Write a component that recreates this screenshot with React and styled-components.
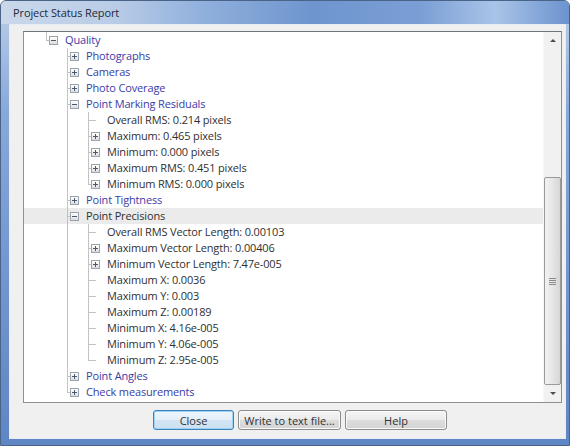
import React from 'react';
import styled, { createGlobalStyle, css } from 'styled-components';

const GlobalStyle = createGlobalStyle`
  html, body {
    margin: 0;
    padding: 0;
    background: #ffffff;
  }
  body {
    font-family: "Open Sans", "Noto Sans", "Liberation Sans", sans-serif;
  }
`;

const colors = {
  link: '#3b3ba6',
  text: '#303030',
  line: '#c2c2c2',
  panel: '#f0f0f0',
};

const Window = styled.div`
  width: 570px;
  height: 446px;
  box-sizing: border-box;
  display: flex;
  flex-direction: column;
  border: 1px solid #4a6488;
  border-radius: 6px 6px 0 0;
  background: linear-gradient(to bottom, #bccfe9 0%, #87a8da 25%, #7397d0 60%, #5f86c4 100%);
  overflow: hidden;
`;

const TitleBar = styled.div`
  height: 23px;
  flex: none;
  display: flex;
  align-items: center;
  padding-left: 12px;
  background: linear-gradient(
    to right,
    #cad8ea 0%,
    #b9cce7 20%,
    #8fafdc 36%,
    #6f95cf 55%,
    #7b9fd5 74%,
    #a9c4e8 87%,
    #6c93ce 100%
  );
  font-size: 11px;
  letter-spacing: -0.1px;
  color: #1c2a3c;
`;

const Body = styled.div`
  flex: 1;
  margin: 0 3px 6px 8px;
  border: 1px solid #e6edf6;
  background: ${colors.panel};
  display: flex;
  flex-direction: column;
  padding: 6px 3px 0 13px;
`;

const TreeBox = styled.div`
  height: 372px;
  box-sizing: border-box;
  display: flex;
  background: #ffffff;
  border: 1px solid #8c8f94;
  border-top-color: #707378;
`;

const TreeList = styled.div`
  flex: 1;
  overflow: hidden;
`;

const Row = styled.div`
  height: 16px;
  display: flex;
  align-items: stretch;
  padding-left: 19px;
  background: ${p => (p.$selected ? '#ebebeb' : 'transparent')};
`;

// one 21px indent step; the sibling line runs 3px in from its left edge
const GuideCell = styled.div`
  position: relative;
  width: 21px;
  flex: none;

  ${p => (p.$vTop || p.$vBottom) && css`
    &::before {
      content: '';
      position: absolute;
      left: 3px;
      width: 1px;
      top: ${p.$vTop ? (p.$root ? '-2px' : '0') : '8px'};
      bottom: ${p.$vBottom ? '0' : '8px'};
      background: ${colors.line};
    }
  `}

  ${p => p.$stub && css`
    &::after {
      content: '';
      position: absolute;
      left: 3px;
      top: 8px;
      width: ${p.$stub}px;
      height: 1px;
      background: ${colors.line};
    }
  `}
`;

const NodeCell = styled(GuideCell)`
  display: flex;
  align-items: center;
`;

const Expander = styled.span`
  position: relative;
  z-index: 1;
  margin-left: 6px;
  width: 9px;
  height: 9px;
  box-sizing: border-box;
  border: 1px solid #9aa3ae;
  background: linear-gradient(to bottom, #ffffff 0%, #f0f0f0 50%, #dcdcdc 100%);

  &::before {
    content: '';
    position: absolute;
    left: 1px;
    top: 3px;
    width: 5px;
    height: 1px;
    background: #4a5870;
  }

  ${p => !p.$open && css`
    &::after {
      content: '';
      position: absolute;
      left: 3px;
      top: 1px;
      width: 1px;
      height: 5px;
      background: #4a5870;
    }
  `}
`;

const Label = styled.span`
  padding-left: 1px;
  font-size: 11px;
  letter-spacing: -0.15px;
  line-height: 16px;
  white-space: nowrap;
  color: ${p => (p.$link ? colors.link : colors.text)};
`;

const ScrollBar = styled.div`
  width: 17px;
  flex: none;
  display: flex;
  flex-direction: column;
  background: #f1f1f1;
  border-left: 1px solid #f8f8f8;
`;

const ArrowButton = styled.div`
  height: 17px;
  flex: none;
  display: flex;
  align-items: center;
  justify-content: center;

  &::before {
    content: '';
    border-left: 3px solid transparent;
    border-right: 3px solid transparent;
    ${p => (p.$down ? 'border-top: 3px solid #4a4a4a;' : 'border-bottom: 3px solid #4a4a4a;')}
  }
`;

const Track = styled.div`
  flex: 1;
  display: flex;
  flex-direction: column;
  padding-top: 128px;
`;

const Thumb = styled.div`
  flex: 1;
  border: 1px solid #9a9a9a;
  border-radius: 2px;
  background: linear-gradient(to right, #f2f2f2 0%, #e6e6e6 50%, #d6d6d6 100%);
  display: flex;
  align-items: center;
  justify-content: center;
`;

const Grip = styled.div`
  width: 7px;
  height: 7px;
  background: repeating-linear-gradient(to bottom, #8c8c8c 0 1px, transparent 1px 2px);
`;

const ButtonRow = styled.div`
  display: flex;
  gap: 4px;
  padding: 7px 0 0 130px;
`;

const Button = styled.button`
  width: ${p => p.$width}px;
  height: 20px;
  padding: 0;
  border-radius: 3px;
  font-family: inherit;
  font-size: 11px;
  color: #333333;
  border: 1px solid #8b8b8b;
  background: linear-gradient(to bottom, #f5f5f5 0%, #ebebeb 50%, #dddddd 51%, #d3d3d3 100%);
  box-shadow: inset 0 0 0 1px #fbfbfb;

  ${p => p.$primary && css`
    border-color: #3d82b8;
    background: linear-gradient(to bottom, #eef6fc 0%, #e2eef8 50%, #d3e5f3 51%, #cbe0f1 100%);
    box-shadow: inset 0 0 0 1px #9fd3f4;
  `}
`;

const tree = {
  label: 'Quality',
  link: true,
  children: [
    { label: 'Photographs', link: true, collapsed: true },
    { label: 'Cameras', link: true, collapsed: true },
    { label: 'Photo Coverage', link: true, collapsed: true },
    {
      label: 'Point Marking Residuals',
      link: true,
      children: [
        { label: 'Overall RMS: 0.214 pixels' },
        { label: 'Maximum: 0.465 pixels', collapsed: true },
        { label: 'Minimum: 0.000 pixels', collapsed: true },
        { label: 'Maximum RMS: 0.451 pixels', collapsed: true },
        { label: 'Minimum RMS: 0.000 pixels', collapsed: true },
      ],
    },
    { label: 'Point Tightness', link: true, collapsed: true },
    {
      label: 'Point Precisions',
      selected: true,
      children: [
        { label: 'Overall RMS Vector Length: 0.00103' },
        { label: 'Maximum Vector Length: 0.00406', collapsed: true },
        { label: 'Minimum Vector Length: 7.47e-005', collapsed: true },
        { label: 'Maximum X: 0.0036' },
        { label: 'Maximum Y: 0.003' },
        { label: 'Maximum Z: 0.00189' },
        { label: 'Minimum X: 4.16e-005' },
        { label: 'Minimum Y: 4.06e-005' },
        { label: 'Minimum Z: 2.95e-005' },
      ],
    },
    { label: 'Point Angles', link: true, collapsed: true },
    { label: 'Check measurements', link: true, collapsed: true },
  ],
};

// walk the tree into visible rows; lastPath[d] says whether the node at depth d is a last sibling
function flatten(node, depth = 0, lastPath = [true], out = []) {
  out.push({ node, depth, lastPath });
  const kids = node.children || [];
  kids.forEach((child, i) => {
    flatten(child, depth + 1, [...lastPath, i === kids.length - 1], out);
  });
  return out;
}

function TreeRow({ node, depth, lastPath }) {
  const open = !!node.children;
  const hasBox = open || node.collapsed;
  const isLast = lastPath[depth];

  const guides = [];
  for (let k = 0; k < depth; k++) {
    const through = !lastPath[k];
    guides.push(<GuideCell key={k} $vTop={through} $vBottom={through} />);
  }

  return (
    <Row $selected={node.selected}>
      {guides}
      <NodeCell $vTop $vBottom={!isLast} $root={depth === 0} $stub={hasBox ? 4 : 8}>
        {hasBox && <Expander $open={open} />}
      </NodeCell>
      <Label $link={node.link}>{node.label}</Label>
    </Row>
  );
}

const App = () => {
  const rows = flatten(tree);

  return (
    <>
      <GlobalStyle />
      <Window>
        <TitleBar>Project Status Report</TitleBar>
        <Body>
          <TreeBox>
            <TreeList>
              {rows.map((r, i) => (
                <TreeRow key={i} {...r} />
              ))}
            </TreeList>
            <ScrollBar>
              <ArrowButton />
              <Track>
                <Thumb>
                  <Grip />
                </Thumb>
              </Track>
              <ArrowButton $down />
            </ScrollBar>
          </TreeBox>
          <ButtonRow>
            <Button $primary $width={81}>Close</Button>
            <Button $width={103}>Write to text file...</Button>
            <Button $width={102}>Help</Button>
          </ButtonRow>
        </Body>
      </Window>
    </>
  );
};

export default App;
